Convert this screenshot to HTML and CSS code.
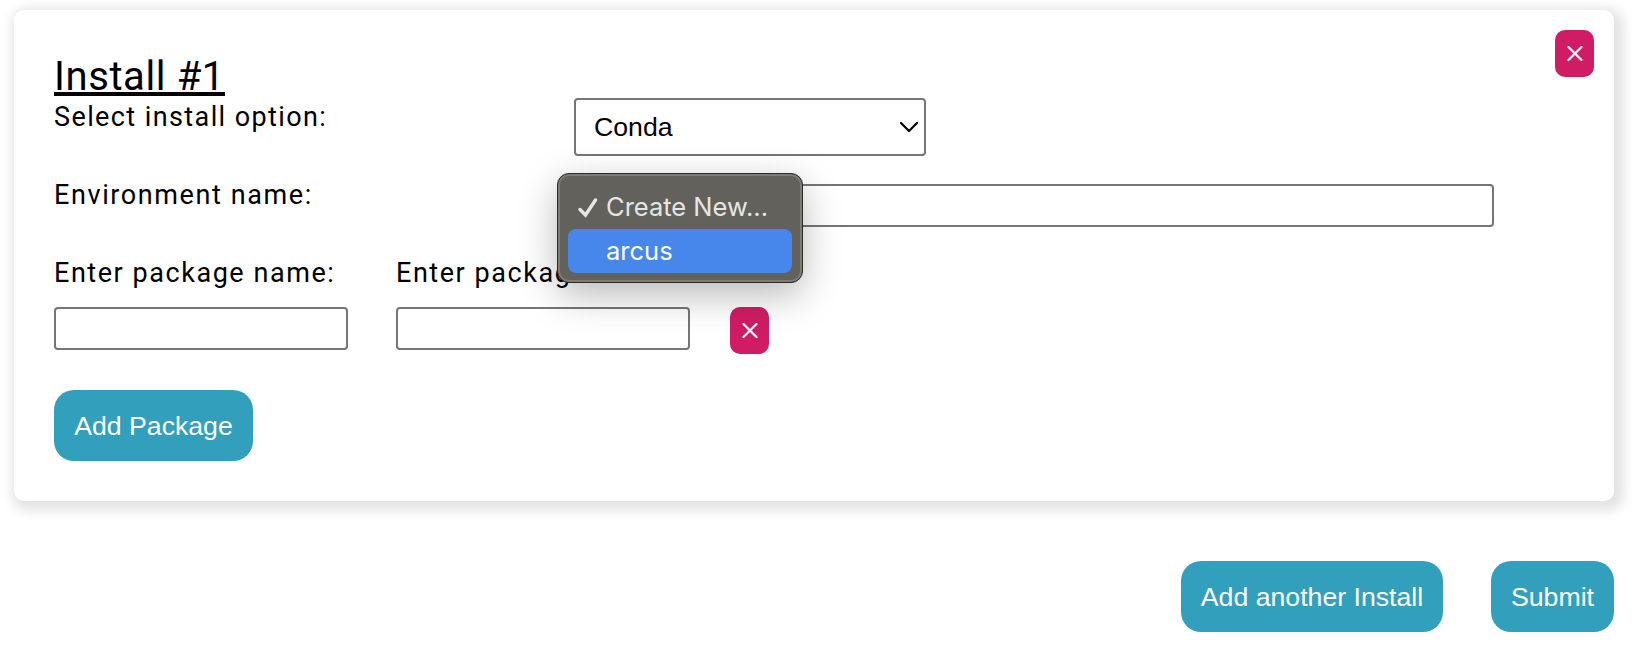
FILE: index.html
```html
<!DOCTYPE html>
<html lang="en">
<head>
<meta charset="utf-8">
<title>Installs</title>
<link rel="stylesheet" href="styles.css">
</head>
<body>
<main class="page">
  <section class="card">
    <button class="remove remove-install" aria-label="Remove install"><svg width="16" height="16" viewBox="0 0 16 16"><path d="M1.500 1L14.500 14M14.500 1L1.500 14"/></svg></button>
    <h2 class="title"><span class="title-text">Install #1</span></h2>
    <div class="row row-option">
      <span class="label label-option">Select install option:</span>
      <div class="select"><span>Conda</span><svg width="18" height="12" viewBox="0 0 18 12"><path d="M1 2L9 10L17 2"/></svg></div>
    </div>
    <div class="row row-env">
      <span class="label label-env">Environment name:</span>
      <div class="env">
        <input class="field env-field" type="text">
        <div class="menu">
          <div class="item"><svg class="check" width="20" height="20" viewBox="0 0 20 20"><path d="M2 11.500L7.500 17L17.500 2"/></svg><span class="create">Create New...</span></div>
          <div class="item active"><span class="arcus">arcus</span></div>
        </div>
      </div>
    </div>
    <div class="packages">
      <label class="package"><span class="label label-pkg">Enter package name:</span><input class="field" type="text"></label>
      <label class="package"><span class="label label-pkg">Enter package</span><input class="field" type="text"></label>
      <button class="remove" aria-label="Remove package"><svg width="16" height="16" viewBox="0 0 16 16"><path d="M1.500 1L14.500 14M14.500 1L1.500 14"/></svg></button>
    </div>
    <button class="button add-package">Add Package</button>
  </section>
  <div class="actions">
    <button class="button add-install">Add another Install</button>
    <button class="button submit">Submit</button>
  </div>
</main>
</body>
</html>
```
FILE: styles.css
```css
* { box-sizing: border-box; }
body { margin: 0; background: #fff; color: #000; font-family: "Liberation Sans", Arial, sans-serif; overflow: hidden; }
.page { padding: 10px 18px 0 14px; }
.card { position: relative; height: 491px; padding: 40px; border-radius: 10px; background: #fff; box-shadow: 4px 4px 12px 6px #e4e4e4; }
.title { margin: 0; height: 48px; font: 400 40px/48px Roboto, sans-serif; }
.title-text { display: inline-block; width: 171px; height: 46px; border-bottom: 4px solid #000; letter-spacing: 0.6px; white-space: nowrap; line-height: 54px; }
.label { font: 400 27px/38px Roboto, sans-serif; white-space: nowrap; }
.label-option { letter-spacing: 1.4px; }
.label-env { letter-spacing: 1.6px; }
.label-pkg { letter-spacing: 1.55px; }
.row { display: grid; grid-template-columns: 520px 1fr; align-items: start; }
.row-option { height: 78px; }
.row-env { height: 78px; }
.select { width: 352px; height: 58px; border: 2px solid #767676; border-radius: 4px; padding: 0 6px 0 18px; display: flex; align-items: center; justify-content: space-between; font-size: 26.670px; }
.select svg, .remove svg, .check { fill: none; stroke: #000; stroke-width: 2.2; stroke-linecap: round; }
.field { display: block; width: 294px; height: 43px; border: 2px solid #767676; border-radius: 4px; background: #fff; padding: 2px; }
.env { position: relative; padding-top: 8px; }
.env-field { width: 920px; }
.menu { position: absolute; left: -17px; top: -3px; width: 246px; height: 110px; padding: 11px 9px 9px; border-radius: 12px; background: #62615c; border: 1px solid #292927; box-shadow: inset 0 0 0 2px #7d7c78, 0 12px 38px rgba(0,0,0,.28); color: #e6e6e4; font: 400 25.500px/44px Inter, sans-serif; }
.item { display: flex; align-items: center; height: 44px; margin: 0 1px; padding-left: 38px; border-radius: 8px; position: relative; white-space: nowrap; }
.active { background: #4787eb; color: #fff; }
.menu .check { position: absolute; left: 10px; top: 13px; stroke: #e6e6e4; stroke-width: 3.4; }
.packages { display: flex; align-items: flex-start; gap: 48px; height: 136px; }
.package .label { display: block; height: 53px; }
.remove { width: 39px; height: 47px; padding: 0; border: 0; border-radius: 10px; background: #d01c64; display: flex; align-items: center; justify-content: center; }
.remove svg { stroke: #fff; }
.packages .remove { margin: 53px 0 0 -8px; }
.remove-install { position: absolute; right: 20px; top: 20px; }
.button { display: block; height: 71px; padding: 0; border: 0; border-radius: 20px; background: #32a0bc; color: #fff; font: 400 26.670px/70px "Liberation Sans", Arial, sans-serif; white-space: nowrap; }
.add-package { width: 199px; }
.actions { margin-top: 60px; display: flex; justify-content: flex-end; gap: 48px; }
.add-install { width: 262px; }
.submit { width: 123px; }
```
